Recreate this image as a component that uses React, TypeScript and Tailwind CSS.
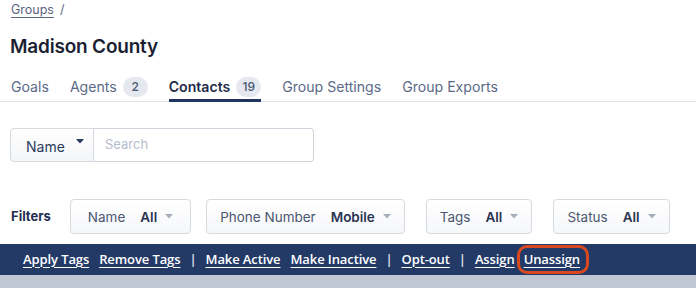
import React from 'react';

const tabs = [
  { label: 'Goals' },
  { label: 'Agents', count: 2 },
  { label: 'Contacts', count: 19, active: true },
  { label: 'Group Settings' },
  { label: 'Group Exports' },
];

const filters = [
  { label: 'Name', value: 'All', w: 'w-[121px]' },
  { label: 'Phone Number', value: 'Mobile', w: 'w-[199px] ml-[15px]' },
  { label: 'Tags', value: 'All', w: 'w-[106px] ml-[21px]' },
  { label: 'Status', value: 'All', w: 'w-[117px] ml-[21px]' },
];

function Caret({ className }: { className?: string }) {
  return (
    <svg width="8" height="5" viewBox="0 0 8 5" className={className}>
      <path d="M0 0 L8 0 L4 4.5 Z" fill="currentColor" />
    </svg>
  );
}

function Sep() {
  return <span className="text-white/90 -mx-[1px]">|</span>;
}

function Action({ children, ring }: { children: React.ReactNode; ring?: boolean }) {
  const link = <a className="underline underline-offset-[3px] decoration-1 text-white cursor-pointer">{children}</a>;
  if (ring) {
    return (
      <span className="relative -ml-[1px]">
        {link}
        <span className="absolute -left-[7px] -right-[9px] -top-[5px] -bottom-[5px] rounded-[10px] border-[3px] border-[#d9481f]" />
      </span>
    );
  }
  return link;
}

export default function App() {
  return (
    <div className="w-[696px] h-[288px] overflow-hidden bg-white font-['Inter','Liberation_Sans',sans-serif]">
      <div className="pl-[11px] pt-[1px] text-[12.5px] text-[#5a6580]">
        <a className="underline underline-offset-[3px] decoration-[#5a6580]">Groups</a>
        <span className="ml-[6px]">/</span>
      </div>

      <h1 className="pl-[10px] mt-[15px] text-[19px] leading-[24px] font-semibold text-[#1c1f33] tracking-[-0.2px]">
        Madison County
      </h1>

      <nav className="mt-[15px] flex items-end gap-[21px] pl-[11px] border-b border-[#dde1e8] h-[28px]">
        {tabs.map(t => (
          <div
            key={t.label}
            className={`flex items-center gap-[6px] h-[28px] pt-[1px] border-b-[3px] -mb-[1px] ${t.active ? 'border-[#1f3460]' : 'border-transparent'}`}
          >
            <span className={`text-[14.1px] ${t.active ? 'font-semibold text-[#1f2b4d]' : 'text-[#5b6a88]'}`}>{t.label}</span>
            {t.count !== undefined && (
              <span className="h-[20px] min-w-[25px] px-[6px] text-center rounded-full bg-[#e5e8ee] text-[12px] leading-[20px] text-[#4a5673] font-medium">
                {t.count}
              </span>
            )}
          </div>
        ))}
      </nav>

      <div className="ml-[10px] mt-[26px] flex h-[34px] w-[304px]">
        <div className="flex items-center justify-between w-[84px] pl-[15px] pr-[9px] border border-[#d5d9e0] rounded-l-[4px] bg-gradient-to-b from-white to-[#f4f5f7] text-[14px] text-[#2a3a5c]">
          <span className="pt-[4px]">Name</span>
          <Caret className="text-[#2a3a5c] -mt-[6px]" />
        </div>
        <div className="flex-1 flex items-center border border-l-0 border-[#cfd4dc] rounded-r-[4px] pl-[11px] text-[13px] text-[#b4bccb]">
          Search
        </div>
      </div>

      <div className="mt-[37px] flex items-center pl-[11px] h-[36px]">
        <span className="text-[13px] font-bold text-[#1f2e52] w-[59px]">Filters</span>
        <div className="flex">
          {filters.map(f => (
            <div
              key={f.label}
              className={`${f.w} h-[35px] flex items-center justify-center gap-[15px] border border-[#d5d9e0] rounded-[4px] bg-gradient-to-b from-white to-[#f6f7f9] text-[13.5px]`}
            >
              <span className="text-[#4b5670]">{f.label}</span>
              <span className="flex items-center gap-[8px]">
                <span className="font-semibold text-[#2a3350]">{f.value}</span>
                <Caret className="text-[#a6adbb]" />
              </span>
            </div>
          ))}
        </div>
      </div>

      <div className="mt-[9px] h-[31px] bg-[#233a67] flex items-center pl-[23px] gap-[10px] text-[13px] font-semibold text-white font-['Open_Sans','Liberation_Sans',sans-serif] tracking-[-0.1px]">
        <Action>Apply Tags</Action>
        <Action>Remove Tags</Action>
        <Sep />
        <Action>Make Active</Action>
        <Action>Make Inactive</Action>
        <Sep />
        <Action>Opt-out</Action>
        <Sep />
        <Action>Assign</Action>
        <Action ring>Unassign</Action>
      </div>
      <div className="h-[14px] bg-[#c0c7d4]" />
    </div>
  );
}
